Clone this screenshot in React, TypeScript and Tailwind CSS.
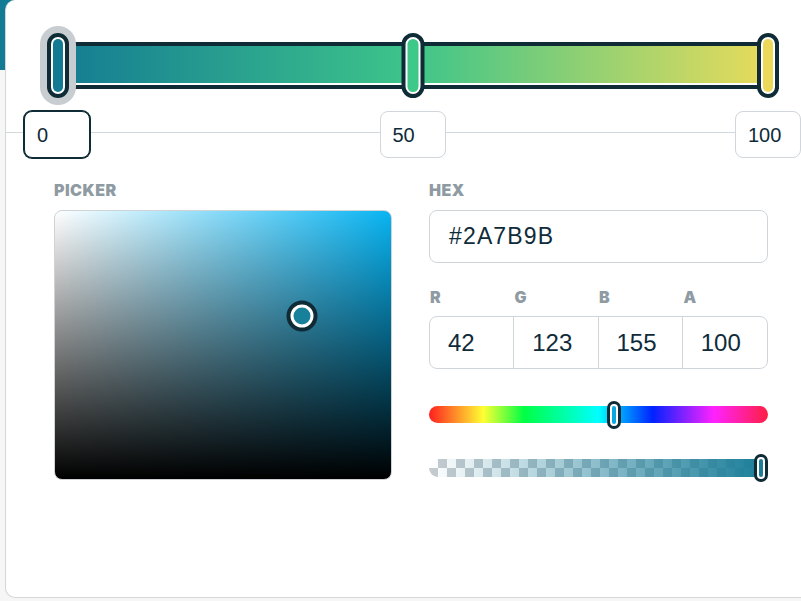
import React from 'react';

const DARK = 'border-[#0f2b36]';

const Handle: React.FC<{ fill: string; className?: string }> = ({ fill, className = '' }) => (
  <div className={`absolute rounded-full border-4 ${DARK} bg-white p-[2px] ${className}`}>
    <div className={`h-full w-full rounded-full ${fill}`} />
  </div>
);

const StopInput: React.FC<{ value: string; active?: boolean }> = ({ value, active }) => (
  <div
    className={`relative z-10 flex h-[47px] w-[66px] items-center rounded-lg border bg-white px-[12px] text-[20px] text-[#0f2b3a] ${
      active ? 'border-[#0f2b36] shadow-[0_0_0_1px_#0f2b36]' : 'border-[#d0d6db]'
    }`}
  >
    {value}
  </div>
);

const Label: React.FC<{ children: React.ReactNode }> = ({ children }) => (
  <div className="font-['Inter',sans-serif] text-[16px] font-black leading-[16px] tracking-[0.03em] text-[#8f9ba3]">
    {children}
  </div>
);

const App: React.FC = () => {
  return (
    <div className="relative flex h-[601px] w-[801px] overflow-hidden bg-[#f6f6f6] font-['Liberation_Sans',Arial,sans-serif]">
      {/* teal header band behind the card */}
      <div className="absolute left-0 top-0 h-[70px] w-[14px] bg-[#137c94]" />

      <div className="relative z-10 ml-[5px] h-[598px] flex-1 rounded-l-[10px] border-b border-l border-[#d4d6d8] bg-white pt-[42px]">
        {/* Gradient stops */}
        <div className="relative ml-[41px] mr-[22px]">
          <div className={`h-[47px] border-4 ${DARK} bg-white`}>
            <div className="h-[37px] bg-[linear-gradient(90deg,#137a93,#3ec58a_50%,#ebdc5a)]" />
          </div>
          <Handle fill="bg-[#137a93]" className="left-0 top-[-9px] h-[65px] w-[22px] shadow-[0_0_0_7px_#c8cdd1]" />
          <Handle fill="bg-[#3ec88a]" className="left-1/2 top-[-9px] h-[65px] w-[23px] -translate-x-1/2" />
          <Handle fill="bg-[#ecd95a]" className="right-0 top-[-9px] h-[65px] w-[22px]" />
        </div>

        <div className="relative mt-[22px] flex justify-between pl-[18px]">
          <div className="absolute left-0 right-0 top-[21px] h-px bg-[#d3d8dc]" />
          <StopInput value="0" active />
          <StopInput value="50" />
          <StopInput value="100" />
        </div>

        {/* Picker + values */}
        <div className="ml-[48px] mt-[24px] grid grid-cols-[338px_339px] gap-x-[37px]">
          <div>
            <Label>PICKER</Label>
            <div className="relative mt-[12px] h-[270px] overflow-hidden rounded-lg border border-[#cfd3d6] bg-[linear-gradient(to_top,#000,transparent),linear-gradient(to_right,#fff,#08b4f2)]">
              <div className="absolute left-[247px] top-[105px] h-[31px] w-[31px] -translate-x-1/2 -translate-y-1/2 rounded-full border-4 border-[#0f2b36] bg-white p-[3px]">
                <div className="h-full w-full rounded-full bg-[#17809b]" />
              </div>
            </div>
          </div>

          <div>
            <Label>HEX</Label>
            <div className="mt-[12px] flex h-[53px] items-center rounded-lg border border-[#d0d5da] pl-[19px] text-[23px] tracking-[0.05em] text-[#0f2b3a]">
              #2A7B9B
            </div>

            <div className="mt-[26px] grid grid-cols-4 pl-px">
              <Label>R</Label>
              <Label>G</Label>
              <Label>B</Label>
              <Label>A</Label>
            </div>
            <div className="mt-[11px] grid h-[53px] grid-cols-4 divide-x divide-[#d0d5da] rounded-lg border border-[#d0d5da] text-[24px] text-[#0f2b3a]">
              {['42', '123', '155', '100'].map((v) => (
                <div key={v} className="flex items-center pl-[18px]">
                  {v}
                </div>
              ))}
            </div>

            {/* Hue */}
            <div className="relative mt-[37px] h-[17px] rounded-full bg-[linear-gradient(90deg,#ff1f1f,#ffff33_16%,#00ff44_28%,#00ffff_50%,#0022ff_66%,#ff22ff_84%,#ff1f44)]">
              <Handle fill="bg-[#0aa8df]" className="left-[54.6%] top-[-5px] h-[28px] w-[14px] -translate-x-1/2 !border-[3px]" />
            </div>

            {/* Alpha */}
            <div className="relative mt-[36px] h-[18px]">
              <div className="mr-[5px] h-full overflow-hidden rounded-l-full bg-[conic-gradient(#c6ccd0_25%,#ffffff_0_50%,#c6ccd0_0_75%,#ffffff_0)] bg-[length:18px_18px]">
                <div className="h-full bg-[linear-gradient(90deg,rgba(28,126,153,0),#1c7e99)]" />
              </div>
              <Handle fill="bg-[#1c7e99]" className="right-0 top-[-5px] h-[28px] w-[14px] !border-[3px]" />
            </div>
          </div>
        </div>
      </div>
    </div>
  );
};

export default App;
